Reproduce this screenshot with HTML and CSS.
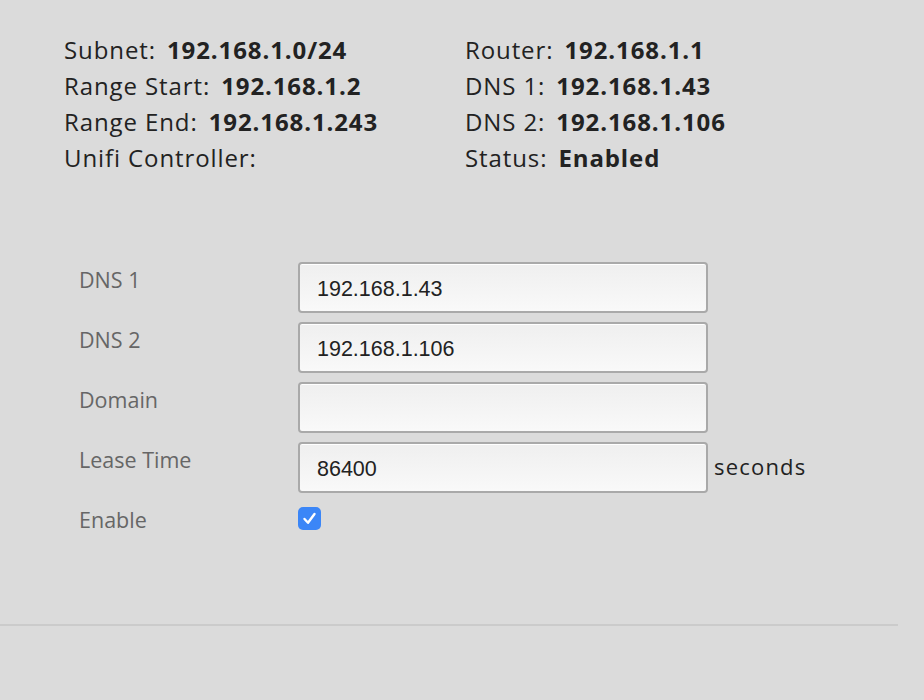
FILE: index.html
```html
<!DOCTYPE html>
<html>
<head>
<meta charset="utf-8">
<link rel="stylesheet" href="styles.css">
</head>
<body>
<div class="page">
  <div class="summary">
    <div class="col">
      <div class="item">Subnet:<b>192.168.1.0/24</b></div>
      <div class="item">Range Start:<b>192.168.1.2</b></div>
      <div class="item">Range End:<b>192.168.1.243</b></div>
      <div class="item">Unifi Controller:</div>
    </div>
    <div class="col">
      <div class="item">Router:<b>192.168.1.1</b></div>
      <div class="item">DNS 1:<b>192.168.1.43</b></div>
      <div class="item">DNS 2:<b>192.168.1.106</b></div>
      <div class="item">Status:<b>Enabled</b></div>
    </div>
  </div>
  <form class="form">
    <label class="label">DNS 1</label>
    <input class="input" type="text" value="192.168.1.43">
    <span></span>
    <label class="label">DNS 2</label>
    <input class="input" type="text" value="192.168.1.106">
    <span></span>
    <label class="label">Domain</label>
    <input class="input" type="text" value="">
    <span></span>
    <label class="label">Lease Time</label>
    <input class="input" type="text" value="86400">
    <span class="unit">seconds</span>
    <label class="label">Enable</label>
    <span class="check">
      <svg viewBox="0 0 23 23" width="23" height="23"><path d="M6.5 12 L10 15.8 L16.5 7" fill="none" stroke="#fff" stroke-width="2.4" stroke-linecap="round" stroke-linejoin="round"/></svg>
    </span>
    <span></span>
  </form>
  <div class="divider"></div>
</div>
</body>
</html>
```

FILE: styles.css
```css
html, body {
  margin: 0;
  padding: 0;
  background: #dbdbdb;
}
.page {
  width: 924px;
  height: 700px;
  font-family: "Open Sans", "Liberation Sans", sans-serif;
  color: #222;
}
.summary {
  display: grid;
  grid-template-columns: 401px auto;
  padding: 32px 0 0 64px;
}
.item {
  font-size: 24px;
  line-height: 36px;
  letter-spacing: 0.9px;
  white-space: nowrap;
}
.item b {
  font-weight: 700;
  margin-left: 11px;
}
.form {
  display: grid;
  grid-template-columns: 219px 410px auto;
  row-gap: 9px;
  margin: 86px 0 0 79px;
  align-items: start;
}
.label {
  font-size: 21.5px;
  line-height: 30px;
  padding-top: 3px;
  color: #666;
}
.input {
  box-sizing: border-box;
  width: 410px;
  height: 51px;
  margin: 0;
  border: 2px solid #a9a9a9;
  border-radius: 4px;
  background: linear-gradient(#efefef, #f9f9f9);
  box-shadow: inset 0 1px 0 #fff;
  padding: 4px 0 0 17px;
  font-family: "Liberation Sans", Arial, sans-serif;
  font-size: 21.5px;
  color: #222;
  outline: none;
}
.unit {
  align-self: center;
  margin-left: 6px;
  margin-bottom: 3px;
  font-size: 22px;
  letter-spacing: 1.2px;
  color: #222;
}
.check {
  display: block;
  width: 23px;
  height: 23px;
  margin-top: 5px;
  border-radius: 5px;
  background: #3b86f7;
}
.check svg {
  display: block;
}
.divider {
  margin-top: 89px;
  width: 898px;
  height: 2px;
  background: #cbcbcb;
}
```
